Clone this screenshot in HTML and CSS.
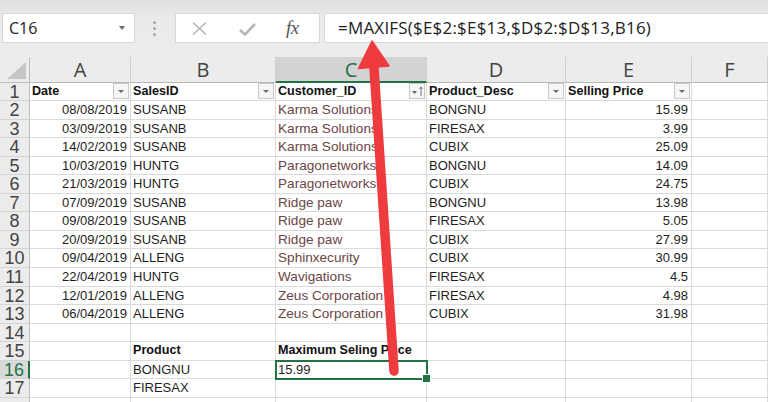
FILE: index.html
```html
<!DOCTYPE html>
<html>
<head>
<meta charset="utf-8">
<link rel="stylesheet" href="styles.css">
</head>
<body>
<div class="fbar">
  <div class="namebox"><span>C16</span><i class="caret"></i></div>
  <div class="grip"><i></i><i></i><i></i></div>
  <div class="fxbox">
    <svg class="ico-x" width="15" height="13" viewBox="0 0 15 13"><path d="M1 0.5 L14 12.5 M14 0.5 L1 12.5" stroke="#b3b3b3" stroke-width="1.4" fill="none"/></svg>
    <svg class="ico-ok" width="17" height="13" viewBox="0 0 17 13"><path d="M1 7 L6 11.5 L16 1" stroke="#b8b8b8" stroke-width="2.6" fill="none"/></svg>
    <span class="fx">fx</span>
  </div>
  <div class="formula">=MAXIFS($E$2:$E$13,$D$2:$D$13,B16)</div>
</div>

<div class="sheet">
  <div class="corner"><i></i></div>
  <div class="ch">A</div><div class="ch">B</div><div class="ch sel">C</div><div class="ch">D</div><div class="ch">E</div><div class="ch">F</div>

  <div class="rh">1</div>
  <div class="cell hd">Date<span class="flt"><i></i></span></div>
  <div class="cell hd">SalesID<span class="flt"><i></i></span></div>
  <div class="cell hd">Customer_ID<span class="flt srt"><svg width="14" height="13" viewBox="0 0 14 13"><path d="M2 6 L7 6 L4.5 9 Z" fill="#666"/><path d="M11 11 V2.5 M9.5 4 L11 2 L12.5 4" stroke="#666" stroke-width="0.9" fill="none"/></svg></span></div>
  <div class="cell hd">Product_Desc<span class="flt"><i></i></span></div>
  <div class="cell hd">Selling Price<span class="flt"><i></i></span></div>
  <div class="cell"></div>

  <div class="rh">2</div><div class="cell num">08/08/2019</div><div class="cell">SUSANB</div><div class="cell c">Karma Solutions</div><div class="cell">BONGNU</div><div class="cell num">15.99</div><div class="cell"></div>
  <div class="rh">3</div><div class="cell num">03/09/2019</div><div class="cell">SUSANB</div><div class="cell c">Karma Solutions</div><div class="cell">FIRESAX</div><div class="cell num">3.99</div><div class="cell"></div>
  <div class="rh">4</div><div class="cell num">14/02/2019</div><div class="cell">SUSANB</div><div class="cell c">Karma Solutions</div><div class="cell">CUBIX</div><div class="cell num">25.09</div><div class="cell"></div>
  <div class="rh">5</div><div class="cell num">10/03/2019</div><div class="cell">HUNTG</div><div class="cell c">Paragonetworks</div><div class="cell">BONGNU</div><div class="cell num">14.09</div><div class="cell"></div>
  <div class="rh">6</div><div class="cell num">21/03/2019</div><div class="cell">HUNTG</div><div class="cell c">Paragonetworks</div><div class="cell">CUBIX</div><div class="cell num">24.75</div><div class="cell"></div>
  <div class="rh">7</div><div class="cell num">07/09/2019</div><div class="cell">SUSANB</div><div class="cell c">Ridge paw</div><div class="cell">BONGNU</div><div class="cell num">13.98</div><div class="cell"></div>
  <div class="rh">8</div><div class="cell num">09/08/2019</div><div class="cell">SUSANB</div><div class="cell c">Ridge paw</div><div class="cell">FIRESAX</div><div class="cell num">5.05</div><div class="cell"></div>
  <div class="rh">9</div><div class="cell num">20/09/2019</div><div class="cell">SUSANB</div><div class="cell c">Ridge paw</div><div class="cell">CUBIX</div><div class="cell num">27.99</div><div class="cell"></div>
  <div class="rh">10</div><div class="cell num">09/04/2019</div><div class="cell">ALLENG</div><div class="cell c">Sphinxecurity</div><div class="cell">CUBIX</div><div class="cell num">30.99</div><div class="cell"></div>
  <div class="rh">11</div><div class="cell num">22/04/2019</div><div class="cell">HUNTG</div><div class="cell c">Wavigations</div><div class="cell">FIRESAX</div><div class="cell num">4.5</div><div class="cell"></div>
  <div class="rh">12</div><div class="cell num">12/01/2019</div><div class="cell">ALLENG</div><div class="cell c">Zeus Corporation</div><div class="cell">FIRESAX</div><div class="cell num">4.98</div><div class="cell"></div>
  <div class="rh">13</div><div class="cell num">06/04/2019</div><div class="cell">ALLENG</div><div class="cell c">Zeus Corporation</div><div class="cell">CUBIX</div><div class="cell num">31.98</div><div class="cell"></div>
  <div class="rh">14</div><div class="cell"></div><div class="cell"></div><div class="cell"></div><div class="cell"></div><div class="cell"></div><div class="cell"></div>
  <div class="rh">15</div><div class="cell"></div><div class="cell hd">Product</div><div class="cell hd">Maximum Seling Price</div><div class="cell"></div><div class="cell"></div><div class="cell"></div>
  <div class="rh rsel">16</div><div class="cell"></div><div class="cell">BONGNU</div><div class="cell active">15.99</div><div class="cell"></div><div class="cell"></div><div class="cell"></div>
  <div class="rh">17</div><div class="cell"></div><div class="cell">FIRESAX</div><div class="cell"></div><div class="cell"></div><div class="cell"></div><div class="cell"></div>
  <div class="rh last"></div><div class="cell"></div><div class="cell"></div><div class="cell"></div><div class="cell"></div><div class="cell"></div><div class="cell"></div>
</div>

<svg class="arrow" width="768" height="402" viewBox="0 0 768 402">
  <line x1="373.6" y1="62" x2="394" y2="371" stroke="#ee3b3e" stroke-width="9.5" stroke-linecap="round"/>
  <polygon points="372,41 358.5,68.5 389,66" fill="#ee3b3e" stroke="#ee3b3e" stroke-width="1.5" stroke-linejoin="round"/>
</svg>
</body>
</html>
```

FILE: styles.css
```css
* { box-sizing: border-box; margin: 0; padding: 0; }
html, body { width: 768px; height: 402px; overflow: hidden; }
body {
  background: #eaeaea;
  font-family: "Liberation Sans", Arial, sans-serif;
  position: relative;
}

/* formula bar */
.fbar {
  display: flex;
  align-items: flex-start;
  height: 57px;
  padding-top: 13px;
  background: linear-gradient(#e0e0e0, #ebebeb 35%, #ececec);
}
.namebox {
  margin-left: 2px;
  width: 133px;
  height: 30px;
  background: #fff;
  border: 1px solid #d6d6d6;
  display: flex;
  align-items: center;
  justify-content: space-between;
  padding: 0 9px 1px 6px;
  font-family: "Open Sans", sans-serif;
  font-size: 16px;
  color: #222;
}
.caret {
  width: 0; height: 0;
  border-left: 3.5px solid transparent;
  border-right: 3.5px solid transparent;
  border-top: 4px solid #6a6a6a;
}
.grip {
  margin-left: 18px;
  width: 3px;
  padding-top: 8px;
  display: flex;
  flex-direction: column;
  gap: 3px;
}
.grip i { display: block; width: 3px; height: 3px; border-radius: 50%; background: #a8a8a8; }
.fxbox {
  margin-left: 19px;
  width: 145px;
  height: 30px;
  background: #fff;
  border: 1px solid #d6d6d6;
  display: flex;
  align-items: center;
  padding-left: 16px;
}
.ico-x { margin-top: 1px; }
.ico-ok { margin-left: 32px; margin-top: 2px; }
.fx {
  margin-left: 30px;
  font-family: "Liberation Serif", "DejaVu Serif", serif;
  font-style: italic;
  font-size: 19px;
  color: #555;
  letter-spacing: -0.5px;
}
.formula {
  flex: 1;
  margin-left: 4px;
  height: 30px;
  background: #fff;
  border: 1px solid #d6d6d6;
  border-right: none;
  padding-left: 13px;
  font-family: "Open Sans", sans-serif;
  font-size: 17px;
  letter-spacing: 0.2px;
  line-height: 27px;
  color: #222;
}

/* sheet grid */
.sheet {
  display: grid;
  grid-template-columns: 30px 101px 145px 151px 139px 126px 76px;
  grid-template-rows: 25.5px repeat(18, 18.55px);
  background: #fff;
}
.corner {
  background: #ececec;
  border-right: 1px solid #bdbdbd;
  border-bottom: 1px solid #bdbdbd;
  display: flex;
  justify-content: flex-end;
  align-items: flex-end;
  padding: 0 3px 3px 0;
}
.corner i {
  display: block;
  width: 0; height: 0;
  border-left: 19px solid transparent;
  border-bottom: 17px solid #c6c6c6;
}
.ch {
  background: #ececec;
  border-right: 1px solid #cfcfcf;
  border-bottom: 1px solid #b9b9b9;
  font-family: "Open Sans", sans-serif;
  font-size: 20px;
  color: #444;
  text-align: center;
  line-height: 25px;
}
.ch.sel {
  background: #d3d3d3;
  color: #217346;
  border-bottom: 2px solid #217346;
}
.rh {
  background: #ececec;
  border-right: 1px solid #bdbdbd;
  border-bottom: 1px solid #d4d4d4;
  font-family: "Liberation Sans", sans-serif;
  font-size: 18px;
  color: #444;
  text-align: center;
  line-height: 18px;
}
.rh.rsel {
  background: #dadada;
  color: #217346;
  border-right: 2px solid #217346;
}
.cell {
  border-right: 1px solid #dadada;
  border-bottom: 1px solid #dadada;
  font-size: 13px;
  line-height: 17.5px;
  color: #1e1e1e;
  padding: 0 2px;
  white-space: nowrap;
  display: flex;
  align-items: flex-end;
}
.cell.num { justify-content: flex-end; padding-right: 3px; }
.cell.hd { font-weight: bold; font-size: 12.6px; color: #111; }
.cell.c {
  font-family: Arial, "Liberation Sans", sans-serif;
  font-size: 13.6px;
  color: #6a4646;
}
.flt {
  margin-left: auto;
  margin-right: -1px;
  align-self: center;
  width: 16px;
  height: 16px;
  border: 1px solid #c8c8c8;
  background: #f6f6f6;
  display: flex;
  align-items: center;
  justify-content: center;
}
.flt i {
  display: block;
  width: 0; height: 0;
  border-left: 3px solid transparent;
  border-right: 3px solid transparent;
  border-top: 3px solid #6b6b6b;
}
.cell.active { position: relative; }
.cell.active::before {
  content: "";
  position: absolute;
  left: -1px; top: -1px; right: -2px; bottom: -2px;
  border: 2px solid #217346;
}
.cell.active::after {
  content: "";
  position: absolute;
  right: -5px; bottom: -5px;
  width: 7px; height: 7px;
  background: #217346;
  border: 1px solid #fff;
}

.arrow {
  position: absolute;
  left: 0; top: 0;
  pointer-events: none;
}
```
